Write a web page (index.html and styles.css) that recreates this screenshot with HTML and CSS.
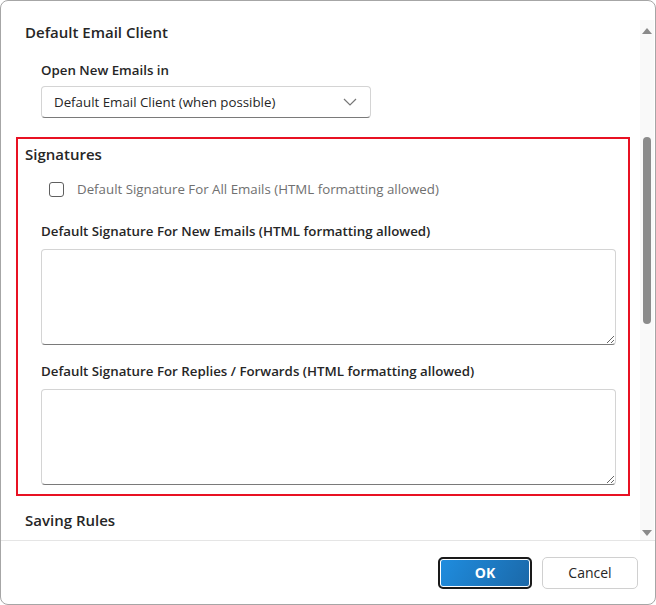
FILE: index.html
```html
<!DOCTYPE html>
<html lang="en">
<head>
    <meta charset="UTF-8">
    <meta name="viewport" content="width=device-width, initial-scale=1.0">
    <title>Settings</title>
    <link rel="stylesheet" href="styles.css">
</head>
<body>
    <div class="window">
        <div class="body">
            <div class="scroll-area">
                <section class="group">
                    <h2>Default Email Client</h2>
                    <label class="field-label tight">Open New Emails in</label>
                    <div class="select">
                        <span>Default Email Client (when possible)</span>
                        <svg width="14" height="8" viewBox="0 0 14 8"><path d="M1 1l6 6 6-6" fill="none" stroke="#777" stroke-width="1.2"/></svg>
                    </div>
                </section>
                <section class="group highlighted">
                    <h2>Signatures</h2>
                    <div class="check-row">
                        <span class="checkbox"></span>
                        <span>Default Signature For All Emails (HTML formatting allowed)</span>
                    </div>
                    <label class="field-label">Default Signature For New Emails (HTML formatting allowed)</label>
                    <textarea class="sig"></textarea>
                    <label class="field-label">Default Signature For Replies / Forwards (HTML formatting allowed)</label>
                    <textarea class="sig"></textarea>
                </section>
                <section class="group">
                    <h2>Saving Rules</h2>
                </section>
            </div>
            <div class="scrollbar">
                <span class="arrow up"></span>
                <span class="thumb"></span>
                <span class="arrow down"></span>
            </div>
        </div>
        <footer>
            <button class="btn primary">OK</button>
            <button class="btn">Cancel</button>
        </footer>
    </div>
</body>
</html>
```

FILE: styles.css
```css
body {
    margin: 0;
    font-family: 'Open Sans', sans-serif;
    color: #262626;
    background-color: #fff;
}
.window {
    width: 656px;
    height: 605px;
    box-sizing: border-box;
    border: 1px solid #a6a6a6;
    border-radius: 8px;
    display: flex;
    flex-direction: column;
    overflow: hidden;
    background-color: #fff;
}
.body {
    flex: 1;
    display: flex;
    overflow: hidden;
}
.scroll-area {
    flex: 1;
    padding: 21px 10px 0 15px;
    overflow: hidden;
}
.group {
    padding: 0 9px;
}
.group h2 {
    font-size: 15px;
    font-weight: 600;
    line-height: 20px;
    margin: 0 0 19px;
}
.highlighted {
    border: 2px solid #e81123;
    padding: 5px 12px 9px 7px;
    margin: 19px 0 14px;
}
.highlighted h2 {
    margin-bottom: 16px;
}
.field-label {
    display: block;
    font-size: 13.3px;
    font-weight: 600;
    line-height: 18px;
    margin: 0 0 9px 16px;
}
.field-label.tight {
    margin-bottom: 7px;
}
.select {
    margin-left: 16px;
    width: 330px;
    height: 32px;
    box-sizing: border-box;
    border: 1px solid #d4d4d4;
    border-bottom-color: #7a7a7a;
    border-radius: 4px;
    display: flex;
    align-items: center;
    justify-content: space-between;
    padding: 0 13px 0 12px;
    font-size: 13.3px;
}
.check-row {
    display: flex;
    align-items: center;
    gap: 13px;
    margin: 0 0 24px 24px;
    font-size: 13.3px;
    color: #707070;
}
.checkbox {
    width: 15px;
    height: 15px;
    box-sizing: border-box;
    border: 1px solid #5f5f5f;
    border-radius: 3px;
}
.sig {
    display: block;
    margin: 0 0 17px 16px;
    width: calc(100% - 16px);
    height: 96px;
    box-sizing: border-box;
    border: 1px solid #d4d4d4;
    border-bottom-color: #7a7a7a;
    border-radius: 4px;
    font-family: inherit;
}
.highlighted .sig:last-child {
    margin-bottom: 0;
}
.scrollbar {
    width: 14px;
    margin: 19px 1px 0 0;
    background-color: #f9f9f9;
    display: flex;
    flex-direction: column;
    align-items: center;
}
.arrow {
    width: 0;
    height: 0;
    border-left: 5px solid transparent;
    border-right: 5px solid transparent;
}
.arrow.up {
    margin-top: 8px;
    border-bottom: 6px solid #8a8a8a;
}
.arrow.down {
    margin-top: auto;
    margin-bottom: 4px;
    border-top: 6px solid #8a8a8a;
}
.thumb {
    width: 8px;
    height: 187px;
    margin-top: 103px;
    border-radius: 4px;
    background-color: #8b8b8b;
}
footer {
    height: 63px;
    border-top: 1px solid #e5e5e5;
    display: flex;
    justify-content: flex-end;
    align-items: center;
    gap: 10px;
    padding-right: 17px;
}
.btn {
    width: 96px;
    height: 32px;
    font-family: inherit;
    font-size: 14px;
    color: #262626;
    background-color: #fff;
    border: 1px solid #d0d0d0;
    border-radius: 5px;
}
.btn.primary {
    width: 94px;
    color: #fff;
    font-weight: 700;
    background: linear-gradient(120deg, #1f8ddf, #1b68a8);
    border: 2px solid #1a1a1a;
    box-shadow: inset 0 0 0 1px #fff;
}
```
